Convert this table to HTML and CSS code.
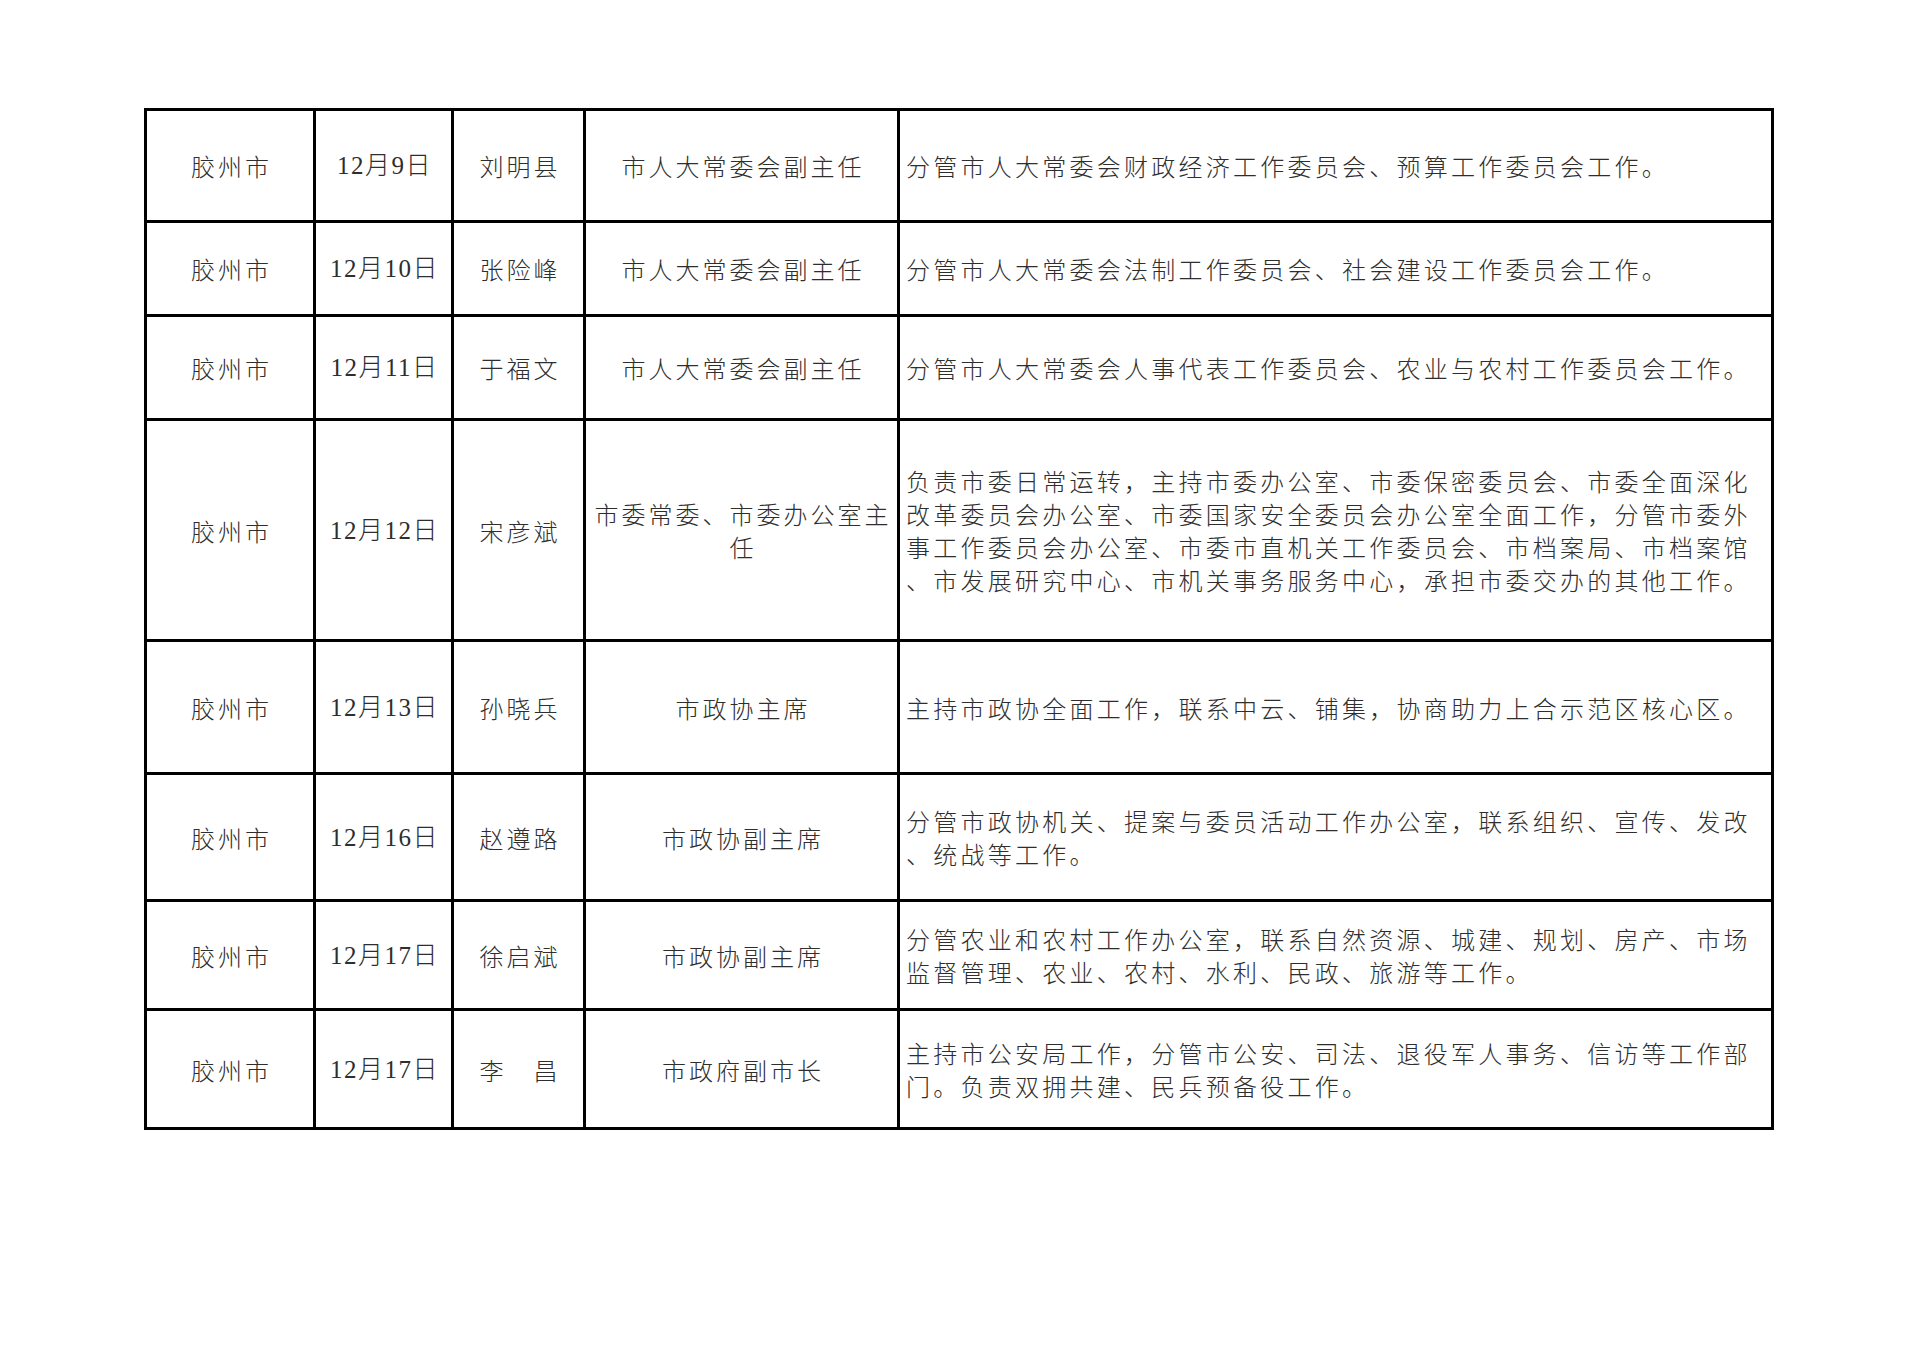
FILE: index.html
```html
<!DOCTYPE html>
<html lang="zh-CN">
<head>
<meta charset="utf-8">
<title>胶州市</title>
<link rel="stylesheet" href="styles.css">
</head>
<body>
<table class="sheet">
  <colgroup>
    <col class="c-city">
    <col class="c-date">
    <col class="c-name">
    <col class="c-post">
    <col class="c-desc">
  </colgroup>
  <tbody>
    <tr class="r1">
      <td class="ctr">胶州市</td>
      <td class="ctr date">12月9日</td>
      <td class="ctr">刘明县</td>
      <td class="ctr">市人大常委会副主任</td>
      <td class="desc">分管市人大常委会财政经济工作委员会、预算工作委员会工作。</td>
    </tr>
    <tr class="r2">
      <td class="ctr">胶州市</td>
      <td class="ctr date">12月10日</td>
      <td class="ctr">张险峰</td>
      <td class="ctr">市人大常委会副主任</td>
      <td class="desc">分管市人大常委会法制工作委员会、社会建设工作委员会工作。</td>
    </tr>
    <tr class="r3">
      <td class="ctr">胶州市</td>
      <td class="ctr date">12月11日</td>
      <td class="ctr">于福文</td>
      <td class="ctr">市人大常委会副主任</td>
      <td class="desc">分管市人大常委会人事代表工作委员会、农业与农村工作委员会工作。</td>
    </tr>
    <tr class="r4">
      <td class="ctr">胶州市</td>
      <td class="ctr date">12月12日</td>
      <td class="ctr">宋彦斌</td>
      <td class="ctr post2">市委常委、市委办公室主<br>任</td>
      <td class="desc">负责市委日常运转，主持市委办公室、市委保密委员会、市委全面深化<br>改革委员会办公室、市委国家安全委员会办公室全面工作，分管市委外<br>事工作委员会办公室、市委市直机关工作委员会、市档案局、市档案馆<br>、市发展研究中心、市机关事务服务中心，承担市委交办的其他工作。</td>
    </tr>
    <tr class="r5">
      <td class="ctr">胶州市</td>
      <td class="ctr date">12月13日</td>
      <td class="ctr">孙晓兵</td>
      <td class="ctr">市政协主席</td>
      <td class="desc">主持市政协全面工作，联系中云、铺集，协商助力上合示范区核心区。</td>
    </tr>
    <tr class="r6">
      <td class="ctr">胶州市</td>
      <td class="ctr date">12月16日</td>
      <td class="ctr">赵遵路</td>
      <td class="ctr">市政协副主席</td>
      <td class="desc">分管市政协机关、提案与委员活动工作办公室，联系组织、宣传、发改<br>、统战等工作。</td>
    </tr>
    <tr class="r7">
      <td class="ctr">胶州市</td>
      <td class="ctr date">12月17日</td>
      <td class="ctr">徐启斌</td>
      <td class="ctr">市政协副主席</td>
      <td class="desc">分管农业和农村工作办公室，联系自然资源、城建、规划、房产、市场<br>监督管理、农业、农村、水利、民政、旅游等工作。</td>
    </tr>
    <tr class="r8">
      <td class="ctr">胶州市</td>
      <td class="ctr date">12月17日</td>
      <td class="ctr">李　昌</td>
      <td class="ctr">市政府副市长</td>
      <td class="desc">主持市公安局工作，分管市公安、司法、退役军人事务、信访等工作部<br>门。负责双拥共建、民兵预备役工作。</td>
    </tr>
  </tbody>
</table>
</body>
</html>
```

FILE: styles.css
```css
html, body {
  margin: 0;
  padding: 0;
  background: #ffffff;
}

body {
  font-family: "Noto Sans CJK SC", "Noto Sans", sans-serif;
  color: #2e2e2e;
}

.sheet {
  border-collapse: collapse;
  table-layout: fixed;
  width: 1630px;
  margin: 108px 0 0 144px;
}

.c-city { width: 169px; }
.c-date { width: 138px; }
.c-name { width: 132px; }
.c-post { width: 314px; }
.c-desc { width: 874px; }

.sheet td {
  border: 3px solid #000;
  padding: 0;
  font-size: 24px;
  line-height: 33px;
  letter-spacing: 3px;
  vertical-align: middle;
  font-weight: 300;
}

.ctr {
  text-align: center;
  padding-left: 3px !important;
}

.date {
  font-family: "Liberation Serif", "Noto Sans CJK SC", serif;
  font-size: 25px !important;
  letter-spacing: 1.5px !important;
  padding-left: 2px !important;
}

.post2 {
  line-height: 33px;
}

.desc {
  text-align: left;
  white-space: nowrap;
  letter-spacing: 3.25px !important;
  padding-left: 6px !important;
}

.r1 { height: 112px; }
.r2 { height: 94px; }
.r3 { height: 104px; }
.r4 { height: 221px; }
.r5 { height: 133px; }
.r6 { height: 127px; }
.r7 { height: 109px; }
.r8 { height: 119px; }
```
